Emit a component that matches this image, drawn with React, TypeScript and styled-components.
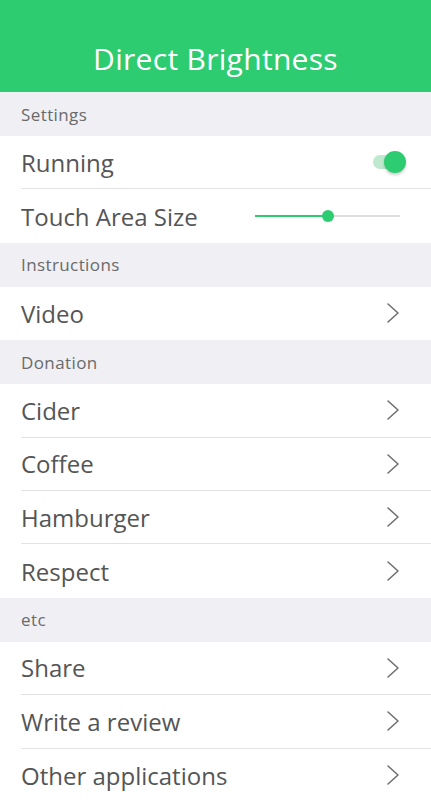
import styled, { createGlobalStyle } from "styled-components"

const GlobalStyle = createGlobalStyle`
  html, body {
    margin: 0;
    padding: 0;
    background: #ffffff;
  }
  * { box-sizing: border-box; }
`

const Page = styled.div`
  width: 431px;
  min-height: 800px;
  display: flex;
  flex-direction: column;
  font-family: "Open Sans", "Liberation Sans", sans-serif;
  background: #ffffff;
  overflow: hidden;
`

const Header = styled.header`
  height: 92px;
  background: #2ecc71;
  display: flex;
  align-items: flex-end;
  justify-content: center;
  padding-bottom: 13px;
`

const Title = styled.h1`
  margin: 0;
  color: #ffffff;
  font-size: 30px;
  font-weight: 400;
  letter-spacing: 0.3px;
`

const SectionHeader = styled.div`
  height: 44px;
  background: #efeff4;
  display: flex;
  align-items: center;
  padding: 0 21px;
  color: #6a6a6a;
  font-size: 17px;
  letter-spacing: 0.4px;
`

const Row = styled.div<{ last?: boolean }>`
  height: 53.4px;
  margin-left: 21px;
  padding-right: 31px;
  display: flex;
  align-items: center;
  justify-content: space-between;
  border-bottom: ${p => (p.last ? "none" : "1px solid #e2e2e6")};
`

const Label = styled.span`
  color: #555555;
  font-size: 24px;
`

const Toggle = styled.div`
  position: relative;
  width: 27px;
  height: 14px;
  border-radius: 7px;
  background: #bfe9cf;
`

const Knob = styled.div`
  position: absolute;
  right: -6px;
  top: -4px;
  width: 22px;
  height: 22px;
  border-radius: 50%;
  background: #2ecc71;
  box-shadow: 0 2px 3px rgba(0, 0, 0, 0.2);
`

const Slider = styled.div`
  position: relative;
  width: 145px;
  height: 2px;
  background: #dedede;
`

const SliderFill = styled.div`
  height: 2px;
  background: #2ecc71;
`

const SliderThumb = styled.div`
  position: absolute;
  top: -5px;
  width: 12px;
  height: 12px;
  margin-left: -6px;
  border-radius: 50%;
  background: #2ecc71;
`

const Chevron = () => (
  <svg width="14" height="22" viewBox="0 0 14 22">
    <path d="M2 2 L12 11 L2 20" fill="none" stroke="#707070" strokeWidth="1.6" strokeLinecap="round" strokeLinejoin="round" />
  </svg>
)

const LinkRow = ({ label, last }: { label: string; last?: boolean }) => (
  <Row last={last}>
    <Label>{label}</Label>
    <Chevron />
  </Row>
)

const sliderValue = 0.5

export default function App() {
  return (
    <Page>
      <GlobalStyle />
      <Header>
        <Title>Direct Brightness</Title>
      </Header>

      <SectionHeader>Settings</SectionHeader>
      <Row>
        <Label>Running</Label>
        <Toggle>
          <Knob />
        </Toggle>
      </Row>
      <Row last>
        <Label>Touch Area Size</Label>
        <Slider>
          <SliderFill style={{ width: `${sliderValue * 100}%` }} />
          <SliderThumb style={{ left: `${sliderValue * 100}%` }} />
        </Slider>
      </Row>

      <SectionHeader>Instructions</SectionHeader>
      <LinkRow label="Video" last />

      <SectionHeader>Donation</SectionHeader>
      <LinkRow label="Cider" />
      <LinkRow label="Coffee" />
      <LinkRow label="Hamburger" />
      <LinkRow label="Respect" last />

      <SectionHeader>etc</SectionHeader>
      <LinkRow label="Share" />
      <LinkRow label="Write a review" />
      <LinkRow label="Other applications" last />
    </Page>
  )
}
